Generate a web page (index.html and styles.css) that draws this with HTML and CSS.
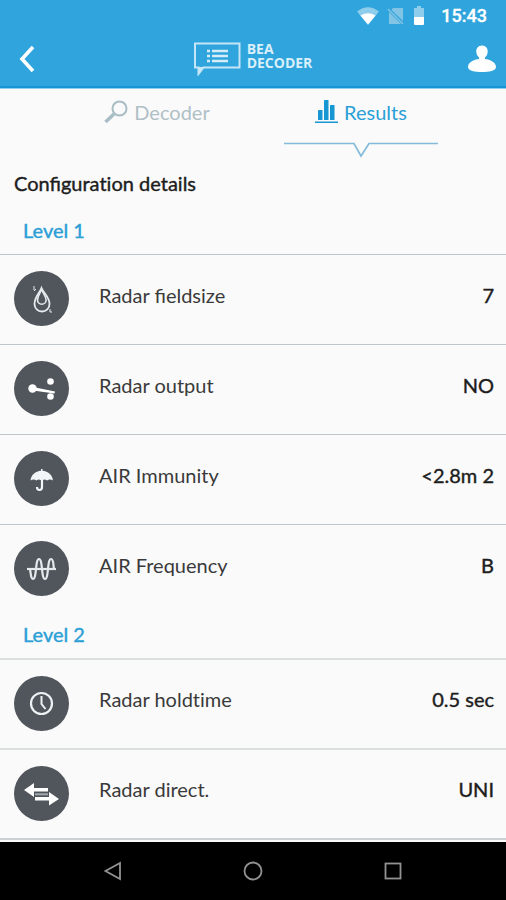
FILE: index.html
```html
<!DOCTYPE html>
<html lang="en">
<head>
<meta charset="utf-8">
<meta name="viewport" content="width=device-width, initial-scale=1">
<title>BEA Decoder</title>
<link rel="stylesheet" href="styles.css">
</head>
<body>
<header class="top">
  <div class="status">
    <svg width="22" height="18" viewBox="0 0 22 18" aria-hidden="true"><path fill="#8fcdec" d="M0 4.500Q11-4 22 4.500L11 18z"/><path fill="#fff" d="M3.500 8.500Q11 4 18.500 8.500L11 17.500z"/></svg>
    <svg width="18" height="18" viewBox="0 0 18 18" aria-hidden="true"><path fill="#82c4e6" d="M6 1h10v13L4.500 3zM2 5l12 12H2z"/><path d="M1 2l15 15" stroke="#82c4e6" stroke-width="1.500"/></svg>
    <svg width="12" height="20" viewBox="0 0 12 20" aria-hidden="true"><path fill="#8fcdec" d="M4 0h4v2h3v9H1V2h3z"/><path fill="#fff" d="M1 11h10v7q0 1-1 1H2q-1 0-1-1z"/></svg>
    <span class="clock">15:43</span>
  </div>
  <div class="bar">
    <button class="icon-button" aria-label="Back"><svg width="16" height="28" viewBox="0 0 16 28"><path d="M14 2L3 14l11 12" fill="none" stroke="#fff" stroke-width="3.600"/></svg></button>
    <div class="brand">
      <svg width="47" height="34" viewBox="0 0 47 34" aria-hidden="true"><path d="M1 1.500h44.500v24H9.500L4.500 32V25.500H1z" fill="none" stroke="#c5e6f7" stroke-width="2"/><path d="M4 25h6l-5 7z" fill="#c5e6f7"/><path d="M13 9h3M13 14h3M13 19h3M18 9h16M18 14h16M18 19h16" stroke="#d4edf9" stroke-width="2.400"/></svg>
      <div class="brand-name"><span>BEA</span><span>DECODER</span></div>
    </div>
    <button class="icon-button" aria-label="Account"><svg width="30" height="28" viewBox="0 0 30 28"><path fill="#fff" d="M15 0.500c4 0 6 3 5.700 6.500-.2 2.500-1.200 4-2.700 5.500v1.500c5 .7 11 3 11 8 0 4-7 5-14 5s-14-1-14-5c0-5 6-7.300 11-8v-1.500c-1.500-1.500-2.500-3-2.700-5.500C9 3.500 11 .5 15 .5z"/></svg></button>
  </div>
</header>
<nav class="tabs">
  <a class="tab" href="#decoder">
    <span class="tab-label"><svg width="24" height="24" viewBox="0 0 24 24" aria-hidden="true"><circle cx="15.500" cy="8.500" r="7" fill="none" stroke="#a9bdc5" stroke-width="2"/><path d="M10 14l-8.500 8" stroke="#a9bdc5" stroke-width="3.600"/></svg>Decoder</span>
  </a>
  <a class="tab active" href="#results" aria-current="page">
    <span class="tab-label"><svg width="23" height="24" viewBox="0 0 23 24" aria-hidden="true"><path d="M3 11q0-1 1-1h3.500v10H3zM9 1q0-1 1-1h3.500v20H9zM15 6q0-1 1-1h3.500v15H15zM0 21.500h23V23H0z" fill="#1696d2"/></svg>Results</span>
    <svg class="pointer" width="154" height="16" viewBox="0 0 154 16" aria-hidden="true"><path d="M0 1.500h70l7 12.500 8-12.500h69" fill="none" stroke="#85bbda" stroke-width="1.700"/></svg>
  </a>
</nav>
<main>
  <h1>Configu<span class="plain">ration</span> details</h1>
  <section>
    <h2>Level 1</h2>
    <dl>
      <div class="row">
        <svg class="badge" viewBox="0 0 55 55" aria-hidden="true"><circle cx="27.500" cy="27.500" r="27.500" fill="#50565c"/><g fill="none" stroke="#e5eaed"><path stroke-width="1.800" d="M27.500 17c-2 5-7 9-7 16a7 7 0 0 0 15 0c0-7-6-11-8-16z"/><path stroke-width="1.600" d="M27.500 18c-1 4-4 7-4 11a4.300 4.300 0 0 0 8.600 0c0-4-3.600-7-4.600-11z"/><path stroke-width="1" d="M20 15v4M22 18l-2 2M36 38v3h2"/></g></svg>
        <dt>Radar fieldsize</dt><dd>7</dd>
      </div>
      <div class="row">
        <svg class="badge" viewBox="0 0 55 55" aria-hidden="true"><circle cx="27.500" cy="27.500" r="27.500" fill="#50565c"/><g fill="#fff"><circle cx="18.500" cy="27.500" r="4.200"/><circle cx="36.500" cy="20.500" r="3.300"/><circle cx="36.500" cy="35.500" r="3.300"/><path d="M19 26l22 4.500-.5 2L19 29.500z"/></g></svg>
        <dt>Radar output</dt><dd>NO</dd>
      </div>
      <div class="row">
        <svg class="badge" viewBox="0 0 55 55" aria-hidden="true"><circle cx="27.500" cy="27.500" r="27.500" fill="#50565c"/><path fill="#f2f6f8" d="M16.500 29.500c.5-5.500 5-9.500 10.500-9.800V18h1.500v1.700c5.500.3 10 4.300 10.500 9.800q-3-2-6 0-2.500-1.500-4-.5h-2.500q-2-1-4 .5-3-2-6 0z"/><path d="M28 28v8q0 3-2.500 3T23 36" fill="none" stroke="#f2f6f8" stroke-width="2.200"/></svg>
        <dt>AIR Immunity</dt><dd>&lt;2.8m 2</dd>
      </div>
      <div class="row">
        <svg class="badge" viewBox="0 0 55 55" aria-hidden="true"><circle cx="27.500" cy="27.500" r="27.500" fill="#50565c"/><path d="M13 28h29" stroke="#e4e9ec" stroke-width="2.200"/><path d="M16 28c1 6 1 10 3 10 4 0 2-20 6-20s2 20 6 20 2-20 6-20c3 0 2 6 3 10" fill="none" stroke="#e4e9ec" stroke-width="2.200"/></svg>
        <dt>AIR Frequency</dt><dd>B</dd>
      </div>
    </dl>
  </section>
  <section>
    <h2>Level 2</h2>
    <dl>
      <div class="row">
        <svg class="badge" viewBox="0 0 55 55" aria-hidden="true"><circle cx="27.500" cy="27.500" r="27.500" fill="#50565c"/><circle cx="27.500" cy="27.500" r="10.500" fill="none" stroke="#eef2f4" stroke-width="2.200"/><path d="M27.500 20v8l4 5" fill="none" stroke="#eef2f4" stroke-width="2"/></svg>
        <dt class="plain">Radar holdtime</dt><dd>0.5 sec</dd>
      </div>
      <div class="row">
        <svg class="badge" viewBox="0 0 55 55" aria-hidden="true"><circle cx="27.500" cy="27.500" r="27.500" fill="#50565c"/><path fill="#fff" d="M10 24l10-7v5h14v3.500H20V31zM45 33l-10-7v5H21V34.500h14v5z"/><path d="M21 28.300h13" stroke="#a2a8ac" stroke-width="2"/></svg>
        <dt>Radar direct.</dt><dd>UNI</dd>
      </div>
    </dl>
  </section>
</main>
<footer class="system">
  <button class="icon-button" aria-label="System back"><svg width="20" height="20" viewBox="0 0 20 20"><path d="M17 2v16L2.500 10z" fill="none" stroke="#929292" stroke-width="1.800"/></svg></button>
  <button class="icon-button" aria-label="Home"><svg width="20" height="20" viewBox="0 0 20 20"><circle cx="10" cy="10" r="8.500" fill="none" stroke="#929292" stroke-width="1.800"/></svg></button>
  <button class="icon-button" aria-label="Recent apps"><svg width="20" height="20" viewBox="0 0 20 20"><rect x="2.500" y="2.500" width="15" height="15" fill="none" stroke="#929292" stroke-width="1.800"/></svg></button>
</footer>
</body>
</html>
```
FILE: styles.css
```css
* { box-sizing: border-box; }

body {
  margin: 0;
  min-height: 100vh;
  display: flex;
  flex-direction: column;
  background: #fafafa;
  color: #1d1d1d;
  font-family: Lato, "Liberation Sans", sans-serif;
  font-size: 20px;
  line-height: 24px;
}

svg { display: block; flex: none; }

.icon-button {
  display: grid;
  place-items: center;
  padding: 0;
  border: 0;
  background: none;
}

.top {
  background: #30a4dc;
  border-bottom: 2px solid #1595d6;
  box-shadow: 0 1px #8fd0f0;
}

.status {
  display: flex;
  align-items: center;
  justify-content: flex-end;
  gap: 8px;
  height: 32px;
  padding-right: 19px;
}

.clock {
  margin-left: 8px;
  color: #fff;
  font: 500 18px/24px Roboto, sans-serif;
  -webkit-text-stroke: 0.3px;
}

.bar {
  display: flex;
  align-items: center;
  justify-content: space-between;
  height: 54px;
  padding: 0 9px 0 19px;
}

.brand {
  display: flex;
  align-items: center;
  gap: 6px;
  padding-left: 4px;
}

.brand-name {
  display: grid;
  padding-bottom: 7px;
  color: #d9effa;
  font: 700 14px/14px "Open Sans", sans-serif;
}

.tabs {
  display: grid;
  grid-template-columns: 1fr 1fr;
  height: 78px;
  padding: 0 43px 0 55px;
}

.tab {
  display: flex;
  flex-direction: column;
  align-items: center;
  gap: 18px;
  padding-top: 12px;
  color: #b0c0c6;
  text-decoration: none;
}

.tab.active { color: #2b9fd6; }

.tab-label {
  display: flex;
  align-items: center;
  gap: 6px;
}

main { flex: 1; }

h1, h2, dl, dd { margin: 0; }

h1, h2, dd {
  font-size: 20px;
  font-weight: 400;
  line-height: 24px;
  -webkit-text-stroke: 0.4px;
}

h1 { padding: 5px 14px 15px; }

h2 {
  height: 44px;
  padding: 8px 23px;
  color: #2b9fd6;
}

/* Keeps "ti" as two separate letters */
.plain { font-variant-ligatures: none; }

.row {
  display: flex;
  align-items: center;
  height: 90px;
  padding: 0 12px 2px 14px;
  border-top: 1px solid #bcc6cb;
}

section:last-child .row { border-top: 2px solid #dcdfe0; }

section:last-child dl { border-bottom: 2px solid #cdd1d3; }

.badge {
  width: 55px;
  height: 55px;
}

dt {
  flex: 1;
  padding: 0 0 8px 30px;
  color: #3a3a3a;
}

dd { padding-bottom: 8px; }

.system {
  display: flex;
  align-items: center;
  justify-content: center;
  gap: 120px;
  height: 58px;
  background: #000;
}
```
